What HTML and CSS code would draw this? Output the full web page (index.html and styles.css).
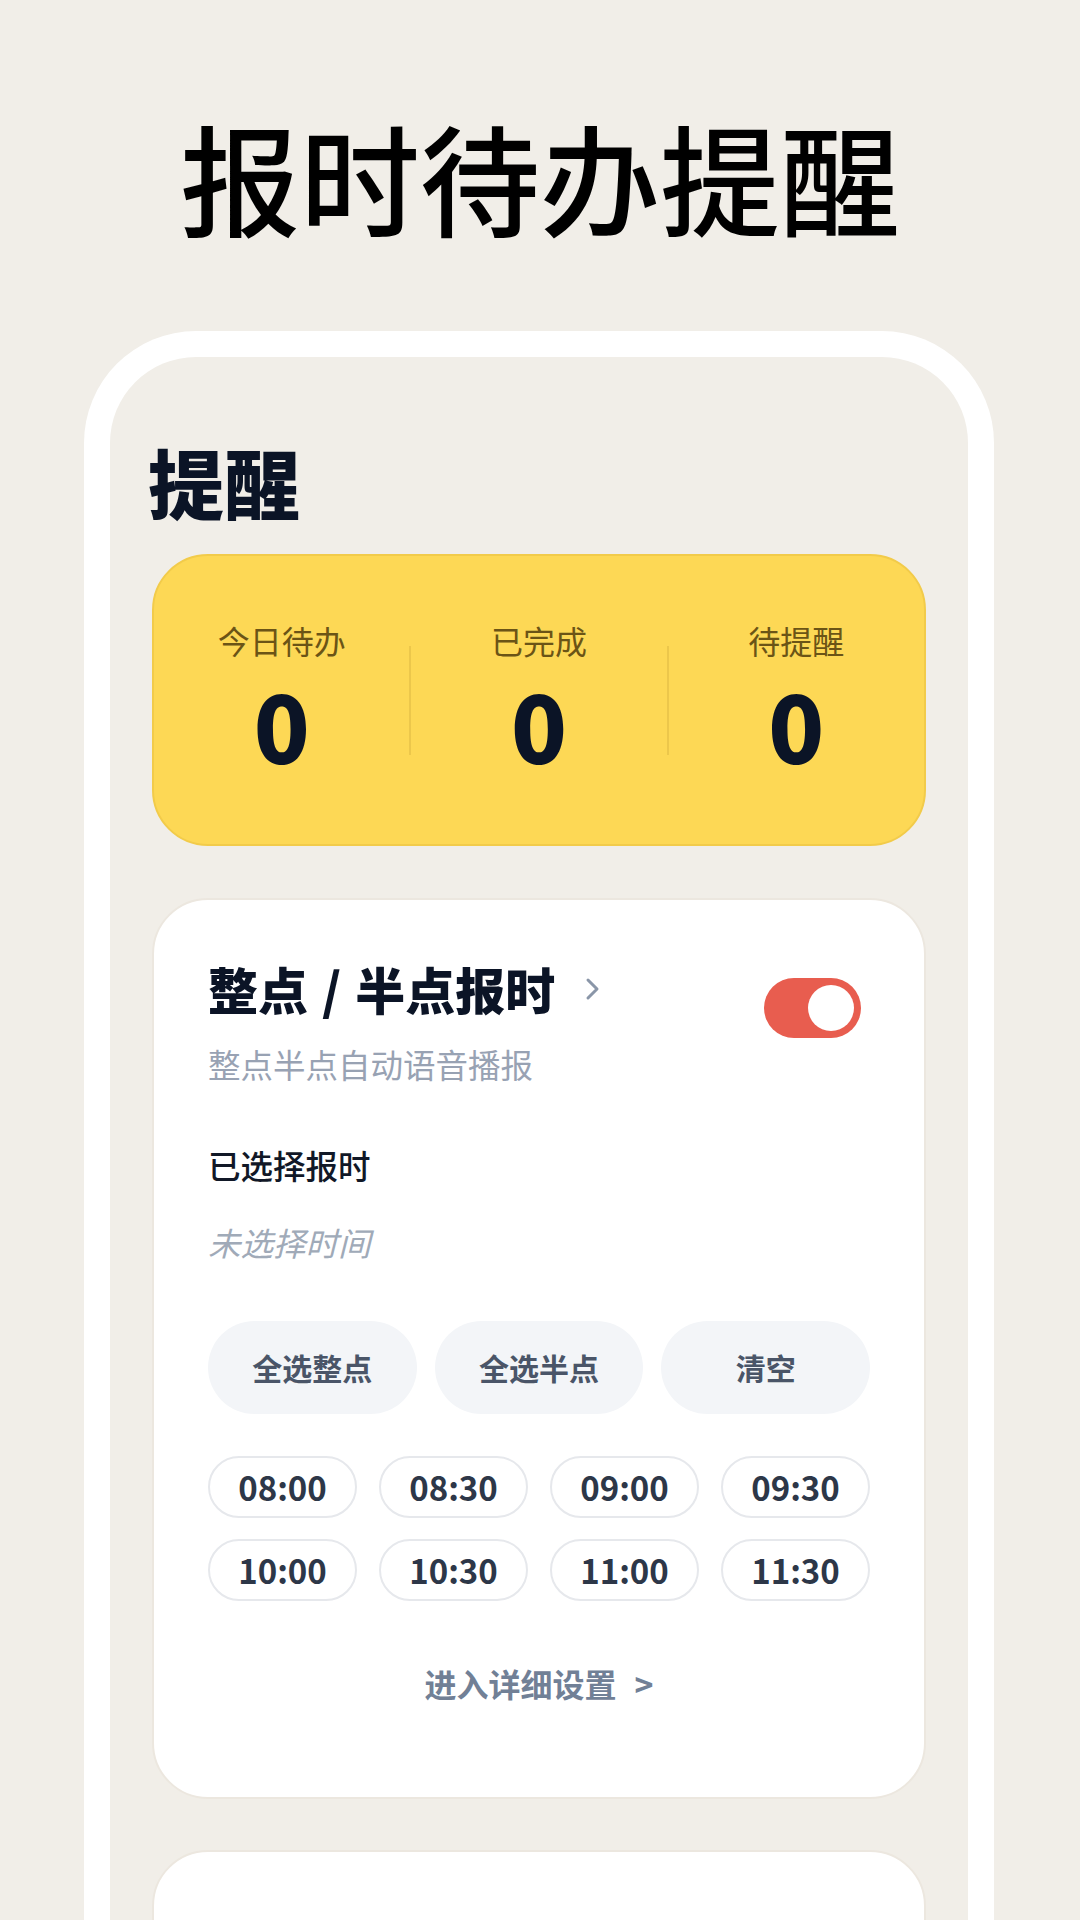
FILE: index.html
```html
<!DOCTYPE html>
<html lang="zh-CN">
  <head>
    <meta charset="utf-8" />
    <title>报时待办提醒</title>
    <meta name="viewport" content="width=device-width, initial-scale=1.0" />
    <link rel="stylesheet" href="styles.css">
  </head>
  <body>
    <header class="hero">
      <h1>报时待办提醒</h1>
    </header>

    <div class="phone">
      <h2 class="page-title">提醒</h2>

      <section class="stats">
        <div class="stat">
          <span class="stat-label">今日待办</span>
          <span class="stat-num">0</span>
        </div>
        <div class="stat-divider"></div>
        <div class="stat">
          <span class="stat-label">已完成</span>
          <span class="stat-num">0</span>
        </div>
        <div class="stat-divider"></div>
        <div class="stat">
          <span class="stat-label">待提醒</span>
          <span class="stat-num">0</span>
        </div>
      </section>

      <section class="card">
        <div class="card-head">
          <div class="card-head-text">
            <h3 class="card-title">
              整点<span class="slash">/</span>半点报时
              <svg class="chevron" width="16" height="24" viewBox="0 0 16 24">
                <path d="M3 3 L12 12 L3 21" fill="none" stroke="#8a96a8" stroke-width="3" stroke-linecap="round" stroke-linejoin="round" />
              </svg>
            </h3>
            <p class="card-sub">整点半点自动语音播报</p>
          </div>
          <button class="toggle on"><span class="knob"></span></button>
        </div>

        <p class="selected-label">已选择报时</p>
        <p class="selected-empty">未选择时间</p>

        <div class="quick">
          <button>全选整点</button>
          <button>全选半点</button>
          <button>清空</button>
        </div>

        <div class="times">
          <button>08:00</button>
          <button>08:30</button>
          <button>09:00</button>
          <button>09:30</button>
          <button>10:00</button>
          <button>10:30</button>
          <button>11:00</button>
          <button>11:30</button>
        </div>

        <a class="more" href="#">进入详细设置<span class="more-arrow">&gt;</span></a>
      </section>

      <section class="card card-next">
        <div class="card-head">
          <div class="card-head-text">
            <h3 class="card-title">待办</h3>
          </div>
        </div>
      </section>
    </div>
  </body>
</html>
```

FILE: styles.css
```css
html, body {
  margin: 0;
  padding: 0;
}
body {
  width: 1080px;
  height: 1920px;
  overflow: hidden;
  background: #f1eee8;
  font-family: "Noto Sans CJK SC", "Noto Sans", sans-serif;
  color: #0b1426;
}

.hero {
  padding-top: 104px;
}
.hero h1 {
  margin: 0;
  font-size: 120px;
  line-height: 144px;
  font-weight: 500;
  text-align: center;
  color: #000;
}

.phone {
  box-sizing: border-box;
  width: 910px;
  min-height: 1700px;
  margin: 83px 0 0 84px;
  padding: 79px 42px 0;
  border: 26px solid #fff;
  border-bottom: none;
  border-radius: 112px 112px 0 0;
  background: #f1eee8;
}

.page-title {
  margin: 0 0 0 -4px;
  font-size: 76px;
  line-height: 1.2;
  font-weight: 900;
  color: #0b1426;
}

.stats {
  box-sizing: border-box;
  height: 292px;
  margin-top: 27px;
  display: grid;
  grid-template-columns: 1fr 2px 1fr 2px 1fr;
  align-items: center;
  background: #fdd855;
  border: 2px solid #f2cb4a;
  border-radius: 56px;
}
.stat {
  display: flex;
  flex-direction: column;
  align-items: center;
  padding-bottom: 9px;
}
.stat-label {
  font-size: 32px;
  line-height: 38px;
  color: #6b5416;
}
.stat-num {
  margin-top: 19px;
  font-size: 92px;
  line-height: 92px;
  font-weight: 900;
  color: #0b1426;
}
.stat-divider {
  height: 109px;
  background: #ecc74b;
}

.card {
  box-sizing: border-box;
  margin-top: 52px;
  padding: 56px 54px 92px;
  background: #fff;
  border: 2px solid #ece7df;
  border-radius: 56px;
}
.card + .card {
  margin-top: 51px;
}
.card-next {
  padding-top: 68px;
}

.card-head {
  display: flex;
  justify-content: space-between;
  align-items: flex-start;
}
.card-title {
  margin: 0;
  display: flex;
  align-items: center;
  font-size: 50px;
  line-height: 1.3;
  font-weight: 900;
  color: #0b1426;
}
.slash {
  margin: 0 14px;
}
.chevron {
  margin-left: 30px;
}
.card-sub {
  margin: 20px 0 0;
  font-size: 32.5px;
  line-height: 1.4;
  color: #98a2b3;
}

.toggle {
  box-sizing: border-box;
  width: 97px;
  height: 60px;
  margin: 22px 9px 0 0;
  padding: 7px;
  border: none;
  border-radius: 30px;
  background: #e85d4f;
  display: flex;
  justify-content: flex-end;
}
.knob {
  width: 46px;
  height: 46px;
  border-radius: 50%;
  background: #fff;
}

.selected-label {
  margin: 55px 0 0;
  font-size: 32.5px;
  line-height: 1.4;
  font-weight: 500;
  color: #111827;
}
.selected-empty {
  margin: 32px 0 0;
  font-size: 32.5px;
  line-height: 1.4;
  font-style: italic;
  color: #a0aab8;
}

.quick {
  margin-top: 56px;
  display: grid;
  grid-template-columns: repeat(3, 1fr);
  gap: 18px;
}
.quick button {
  height: 93px;
  border: none;
  border-radius: 47px;
  background: #f3f5f8;
  font-family: inherit;
  font-size: 30px;
  font-weight: 700;
  color: #4a5568;
}

.times {
  margin-top: 42px;
  display: grid;
  grid-template-columns: repeat(4, 1fr);
  column-gap: 22px;
  row-gap: 21px;
}
.times button {
  box-sizing: border-box;
  height: 62px;
  border: 2px solid #e6e8ec;
  border-radius: 31px;
  background: #fff;
  font-family: inherit;
  font-size: 33px;
  font-weight: 700;
  color: #2d3748;
}

.more {
  display: block;
  margin-top: 60px;
  text-align: center;
  text-decoration: none;
  font-size: 32px;
  line-height: 1.4;
  font-weight: 700;
  color: #718096;
}
.more-arrow {
  margin-left: 18px;
}
```
